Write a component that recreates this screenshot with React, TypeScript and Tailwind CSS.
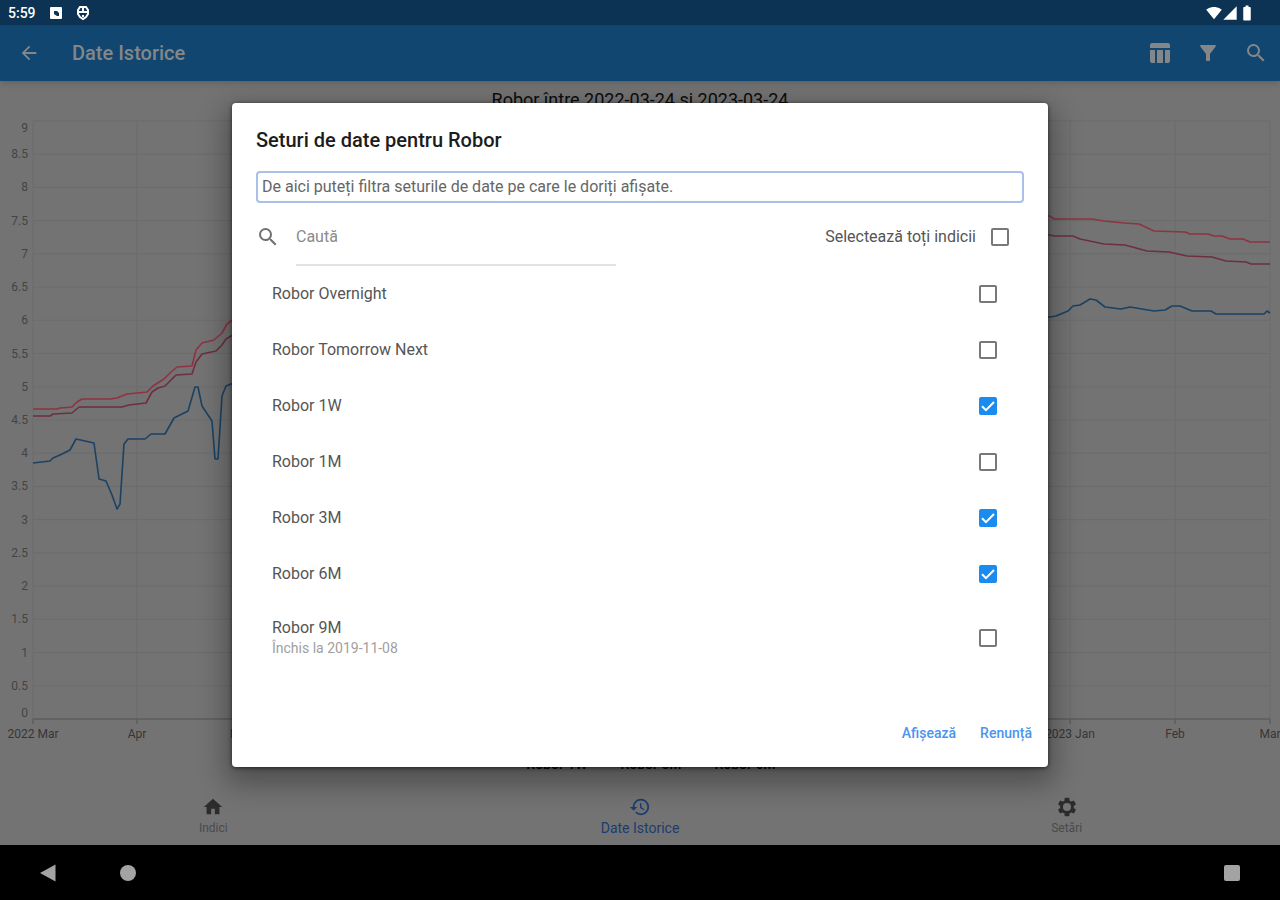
import { useState } from 'react'
import {
  MdArrowBack,
  MdBatteryFull,
  MdFilterAlt,
  MdHistory,
  MdHome,
  MdSearch,
  MdSignalCellular4Bar,
  MdSignalWifi4Bar
} from 'react-icons/md'

interface Dataset {
  id: string
  name: string
  note?: string
}

const datasets: Dataset[] = [
  { id: 'on', name: 'Robor Overnight' },
  { id: 'tn', name: 'Robor Tomorrow Next' },
  { id: '1w', name: 'Robor 1W' },
  { id: '1m', name: 'Robor 1M' },
  { id: '3m', name: 'Robor 3M' },
  { id: '6m', name: 'Robor 6M' },
  { id: '9m', name: 'Robor 9M', note: 'Închis la 2019-11-08' }
]

const yTicks = Array.from({ length: 19 }, (_, i) => i / 2)

const xTicks = [
  { x: 33, label: '2022 Mar' },
  { x: 137, label: 'Apr' },
  { x: 240, label: 'Mai' },
  { x: 1070, label: '2023 Jan' },
  { x: 1175, label: 'Feb' },
  { x: 1270, label: 'Mar' }
]

const series = [
  {
    name: 'Robor 6M',
    color: '#8f3343',
    points:
      '33,409 57,409 60,408 72,407 77,402 82,399 110,399 117,398 127,394 147,392 153,386 164,379 170,373 177,367 192,366 196,350 202,343 214,340 222,333 227,324 231,321 400,250 700,205 1050,216 1054,219 1092,219 1104,221 1124,223 1139,224 1154,231 1185,232 1190,234 1208,234 1214,236 1222,236 1230,239 1243,239 1250,242 1270,242'
  },
  {
    name: 'Robor 3M',
    color: '#6e2f3e',
    points:
      '33,416 50,416 53,414 72,413 79,407 122,407 129,405 146,403 152,392 158,388 165,386 176,375 192,374 196,362 202,354 216,351 222,345 226,339 231,336 400,265 700,220 1050,235 1054,236 1073,236 1080,239 1104,244 1125,245 1147,251 1169,252 1187,256 1212,257 1226,261 1246,262 1251,264 1270,264'
  },
  {
    name: 'Robor 1W',
    color: '#1a4264',
    points:
      '33,463 50,461 53,458 60,455 70,450 76,439 94,443 99,479 106,481 112,495 117,509 120,504 124,444 128,439 145,439 151,434 165,434 174,418 188,411 195,387 198,387 202,406 212,421 215,459 218,459 222,396 226,386 231,384 400,340 700,310 1050,317 1056,316 1068,311 1073,306 1080,305 1090,299 1096,300 1105,307 1121,309 1130,307 1154,311 1165,310 1172,306 1180,306 1192,311 1211,311 1216,314 1264,314 1267,311 1270,313'
  }
]

const tickY = (value: number) => 719 - value * 66.45

// first and last labels are kept inside the plot area
const labelY = (value: number) => {
  if (value === 0) return 717
  if (value === 9) return 132
  return tickY(value) + 4
}

function Chart() {
  return (
    <svg viewBox="0 81 1280 707" className="block w-full font-[Roboto,sans-serif]" role="img">
      <text x="640" y="106" textAnchor="middle" className="fill-[#0c0c0c] text-[18px]">
        Robor între 2022-03-24 și 2023-03-24
      </text>
      {yTicks.map(value => (
        <g key={value}>
          <line
            x1="33"
            x2="1270"
            y1={tickY(value)}
            y2={tickY(value)}
            stroke={value === 0 ? '#525252' : '#6c6c6c'}
          />
          <text x="28" y={labelY(value)} textAnchor="end" className="fill-[#444444] text-[12px]">
            {value}
          </text>
        </g>
      ))}
      {xTicks.map(tick => (
        <g key={tick.x}>
          <line x1={tick.x} x2={tick.x} y1="121" y2="719" stroke="#6c6c6c" />
          <line x1={tick.x} x2={tick.x} y1="719" y2="724" stroke="#525252" />
          <text x={tick.x} y="738" textAnchor="middle" className="fill-[#363636] text-[12px]">
            {tick.label}
          </text>
        </g>
      ))}
      {series.map(line => (
        <polyline
          key={line.name}
          points={line.points}
          fill="none"
          stroke={line.color}
          strokeWidth="1.6"
          strokeLinejoin="round"
        />
      ))}
      <g textAnchor="middle" className="fill-black text-[14px] font-medium">
        <text x="557" y="769">Robor 1W</text>
        <text x="651" y="769">Robor 3M</text>
        <text x="745" y="769">Robor 6M</text>
      </g>
    </svg>
  )
}

function TableIcon() {
  return (
    <svg viewBox="0 0 20 20" className="size-5" fill="currentColor">
      <path d="M2 0h16a2 2 0 0 1 2 2v3H0V2a2 2 0 0 1 2-2z" />
      <path d="M0 7h5v13H2a2 2 0 0 1-2-2zM7 7h6v13H7zM15 7h5v11a2 2 0 0 1-2 2h-3z" />
    </svg>
  )
}

function GearIcon() {
  return (
    <svg viewBox="0 0 24 24" className="size-6 text-[#2c2c2c]" fill="currentColor" fillRule="evenodd">
      <path d="M19.43 12.98c.04-.32.07-.64.07-.98s-.03-.66-.07-.98l2.11-1.65c.19-.15.24-.42.12-.64l-2-3.46c-.12-.22-.39-.3-.61-.22l-2.49 1c-.52-.4-1.08-.73-1.69-.98l-.38-2.65A.49.49 0 0 0 14 2h-4c-.25 0-.46.18-.49.42l-.38 2.65c-.61.25-1.17.59-1.69.98l-2.49-1c-.23-.09-.49 0-.61.22l-2 3.46c-.13.22-.07.49.12.64l2.11 1.65c-.04.32-.07.65-.07.98s.03.66.07.98l-2.11 1.65c-.19.15-.24.42-.12.64l2 3.46c.12.22.39.3.61.22l2.49-1c.52.4 1.08.73 1.69.98l.38 2.65c.03.24.24.42.49.42h4c.25 0 .46-.18.49-.42l.38-2.65c.61-.25 1.17-.59 1.69-.98l2.49 1c.23.09.49 0 .61-.22l2-3.46c.12-.22.07-.49-.12-.64zM12 16.4a4.4 4.4 0 1 1 0-8.8 4.4 4.4 0 0 1 0 8.8z" />
    </svg>
  )
}

interface CheckboxProps {
  id: string
  checked: boolean
  onChange: () => void
}

function Checkbox({ id, checked, onChange }: CheckboxProps) {
  return (
    <span className="relative block size-[18px] shrink-0">
      <input
        id={id}
        type="checkbox"
        checked={checked}
        onChange={onChange}
        className="block size-[18px] appearance-none rounded-xs border-2 border-[#787878] bg-white checked:border-[#1a8cf0] checked:bg-[#1a8cf0]"
      />
      {checked && (
        <svg viewBox="0 0 18 18" className="pointer-events-none absolute inset-0 size-[18px]">
          <path d="M3 9.2 7 13.2 15 5" fill="none" stroke="#fff" strokeWidth="2" />
        </svg>
      )}
    </span>
  )
}

function StatusBar() {
  return (
    <div className="flex h-[25px] items-center justify-between bg-[#0c3354] pr-6 pl-2 text-white">
      <div className="flex items-center gap-3.5">
        <span className="text-sm font-medium">5:59</span>
        <svg viewBox="0 0 12 12" className="size-3">
          <rect width="12" height="12" rx="1" fill="#fff" />
          <path d="M4 4h3l2 2v3H7L4 7z" fill="#0c3354" />
        </svg>
        <svg viewBox="0 0 14 16" className="h-4 w-3.5" fill="none" stroke="#fff" strokeWidth="2">
          <path d="M4 2h6l2 3v4l-2 3-3 2-3-2-2-3V5z" />
          <path d="M2 7h10M7 3v4M6 11h2" />
        </svg>
      </div>
      <div className="flex items-center">
        <MdSignalWifi4Bar className="size-4" />
        <MdSignalCellular4Bar className="size-4" />
        <MdBatteryFull className="size-[18px]" />
      </div>
    </div>
  )
}

export default function App() {
  const [selected, setSelected] = useState<string[]>(['1w', '3m', '6m'])
  const [search, setSearch] = useState('')

  const allSelected = selected.length === datasets.length
  const visible = datasets.filter(d => d.name.toLowerCase().includes(search.toLowerCase()))

  const toggle = (id: string) => {
    setSelected(prev => (prev.includes(id) ? prev.filter(s => s !== id) : [...prev, id]))
  }

  const toggleAll = () => {
    setSelected(allSelected ? [] : datasets.map(d => d.id))
  }

  return (
    <div className="flex min-h-screen flex-col bg-black font-[Roboto,sans-serif]">
      <StatusBar />

      <div className="relative flex-1 bg-[#737373]">
        <header className="flex h-14 items-center bg-[#10466f] px-3 text-[#848789] shadow-md">
          <button type="button" aria-label="Înapoi" className="p-1.5">
            <MdArrowBack className="size-[22px]" />
          </button>
          <h1 className="ml-6 flex-1 pl-0.5 text-xl font-medium">Date Istorice</h1>
          <div className="flex items-center gap-6">
            <button type="button" aria-label="Tabel" className="px-0.5">
              <TableIcon />
            </button>
            <button type="button" aria-label="Filtre">
              <MdFilterAlt className="size-6" />
            </button>
            <button type="button" aria-label="Caută">
              <MdSearch className="size-6" />
            </button>
          </div>
        </header>

        <Chart />

        <nav className="flex h-[57px] text-xs text-[#4a4a4a]">
          <a href="#indici" className="flex flex-1 flex-col items-center pt-2">
            <MdHome className="size-[22px] text-[#2c2c2c]" />
            <span className="pt-0.5">Indici</span>
          </a>
          <a href="#istoric" className="flex flex-1 flex-col items-center pt-2 text-[#1c3c70]">
            <MdHistory className="size-[22px]" />
            <span className="pt-0.5 text-sm leading-4">Date Istorice</span>
          </a>
          <a href="#setari" className="flex flex-1 flex-col items-center pt-2">
            <span className="flex size-[22px] items-center justify-center">
              <GearIcon />
            </span>
            <span className="pt-0.5">Setări</span>
          </a>
        </nav>

        <div className="absolute inset-0 flex items-center justify-center">
          <section
            role="dialog"
            aria-labelledby="dialog-title"
            className="w-full max-w-[816px] rounded-sm bg-white pt-6 pb-[15px] shadow-[0_11px_28px_6px_rgba(0,0,0,0.32),0_1px_4px_rgba(0,0,0,0.6)]"
          >
            <div className="px-6">
              <h2 id="dialog-title" className="mb-[18px] text-xl leading-[26px] font-medium text-[#1c1c1c]">
                Seturi de date pentru Robor
              </h2>
              <p className="flex h-8 items-center rounded-sm border-2 border-[#a9c0e8] px-1 text-base text-[#666666]">
                De aici puteți filtra seturile de date pe care le doriți afișate.
              </p>

              <div className="mt-2 flex h-[55px] justify-between">
                <div className="flex">
                  <label htmlFor="search" aria-label="Caută" className="mt-3.5 mr-4 text-[#707070]">
                    <MdSearch className="size-6" />
                  </label>
                  <input
                    id="search"
                    type="text"
                    placeholder="Caută"
                    value={search}
                    onChange={event => setSearch(event.target.value)}
                    className="w-80 border-b-2 border-[#e2e2e2] pb-0.5 text-base text-[#5c5c5c] outline-none placeholder:text-[#8a8a8a]"
                  />
                </div>
                <div className="flex items-center gap-[15px] pr-[15px] pb-1">
                  <label htmlFor="all" className="text-base text-[#555555]">
                    Selectează toți indicii
                  </label>
                  <Checkbox id="all" checked={allSelected} onChange={toggleAll} />
                </div>
              </div>

              <ul className="text-base text-[#555555]">
                {visible.map(dataset => (
                  <li
                    key={dataset.id}
                    className={`flex items-center justify-between pr-[27px] pl-4 ${dataset.note ? 'h-[72px]' : 'h-14'}`}
                  >
                    <label htmlFor={dataset.id} className="leading-5">
                      {dataset.name}
                      {dataset.note && (
                        <span className="block text-sm leading-5 text-[#a0a0a0]">{dataset.note}</span>
                      )}
                    </label>
                    <Checkbox
                      id={dataset.id}
                      checked={selected.includes(dataset.id)}
                      onChange={() => toggle(dataset.id)}
                    />
                  </li>
                ))}
              </ul>
            </div>

            <div className="mt-10 flex h-[38px] justify-end gap-2 px-2 text-sm font-medium text-[#4a94ee]">
              <button type="button" className="px-2">
                Afișează
              </button>
              <button type="button" className="px-2">
                Renunță
              </button>
            </div>
          </section>
        </div>
      </div>

      <div className="flex h-[55px] items-center justify-between bg-black px-10">
        <div className="flex items-center gap-16">
          <button type="button" aria-label="Înapoi">
            <svg viewBox="0 0 16 18" className="h-[18px] w-4">
              <path d="M0 9 15.5 0.5v17z" fill="#a3a3a3" />
            </svg>
          </button>
          <button type="button" aria-label="Acasă" className="size-4 rounded-full bg-[#a3a3a3]" />
        </div>
        <button type="button" aria-label="Recente" className="size-4 rounded-xs bg-[#a3a3a3]" />
      </div>
    </div>
  )
}
